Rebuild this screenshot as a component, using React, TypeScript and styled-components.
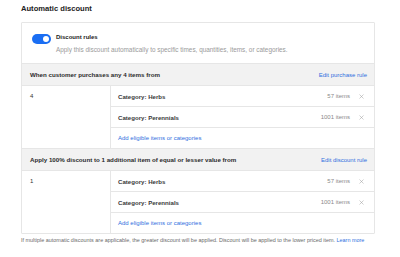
import React from 'react'
import styled, { createGlobalStyle } from 'styled-components'

const GlobalStyle = createGlobalStyle`
    html, body {
        margin: 0;
        padding: 0;
        background: #fff;
    }
    body {
        font-family: "Liberation Sans", Arial, sans-serif;
        color: #2b2b2b;
    }
`

interface Rule {
    title: string
    action: string
    qty: string
    items: { name: string; count: string }[]
}

const rules: Rule[] = [
    {
        title: 'When customer purchases any 4 items from',
        action: 'Edit purchase rule',
        qty: '4',
        items: [
            { name: 'Category: Herbs', count: '57 items' },
            { name: 'Category: Perennials', count: '1001 items' },
        ],
    },
    {
        title: 'Apply 100% discount to 1 additional item of equal or lesser value from',
        action: 'Edit discount rule',
        qty: '1',
        items: [
            { name: 'Category: Herbs', count: '57 items' },
            { name: 'Category: Perennials', count: '1001 items' },
        ],
    },
]

export default function App() {
    return (
        <Page>
            <GlobalStyle />
            <Title>Automatic discount</Title>
            <Card>
                <ToggleSection>
                    <Toggle>
                        <Knob />
                    </Toggle>
                    <ToggleText>
                        <ToggleLabel>Discount rules</ToggleLabel>
                        <ToggleHint>Apply this discount automatically to specific times, quantities, items, or categories.</ToggleHint>
                    </ToggleText>
                </ToggleSection>
                {rules.map(rule => (
                    <RuleBlock key={rule.action}>
                        <RuleHeader>
                            <RuleTitle>{rule.title}</RuleTitle>
                            <Link>{rule.action}</Link>
                        </RuleHeader>
                        <RuleBody>
                            <Qty>{rule.qty}</Qty>
                            <ItemList>
                                {rule.items.map(item => (
                                    <ItemRow key={item.name}>
                                        <ItemName>{item.name}</ItemName>
                                        <ItemCount>{item.count}</ItemCount>
                                        <RemoveIcon viewBox="0 0 10 10">
                                            <path d="M1 1 L9 9 M9 1 L1 9" />
                                        </RemoveIcon>
                                    </ItemRow>
                                ))}
                                <ItemRow>
                                    <Link>Add eligible items or categories</Link>
                                </ItemRow>
                            </ItemList>
                        </RuleBody>
                    </RuleBlock>
                ))}
            </Card>
            <Footer>
                If multiple automatic discounts are applicable, the greater discount will be applied. Discount will be applied to the lower priced item. <Link>Learn more</Link>
            </Footer>
        </Page>
    )
}

const Page = styled.div`
    width: 400px;
    height: 257px;
    padding: 4px 25px 0 21px;
    box-sizing: border-box;
    overflow: hidden;
`

const Title = styled.div`
    font-size: 7.6px;
    font-weight: 700;
    line-height: 10px;
    height: 18px;
    color: #222;
`

const Card = styled.div`
    border: 1px solid #e6e6e6;
    border-radius: 1px;
`

const ToggleSection = styled.div`
    display: flex;
    align-items: flex-start;
    gap: 5px;
    padding: 10px 11px 0 10px;
    height: 41px;
    box-sizing: border-box;
    border-bottom: 1px solid #e6e6e6;
`

const Toggle = styled.div`
    width: 19px;
    height: 10px;
    border-radius: 5px;
    background: #1a6ef3;
    position: relative;
    flex-shrink: 0;
    margin-top: 1px;
`

const Knob = styled.div`
    position: absolute;
    right: 2px;
    top: 2px;
    width: 6px;
    height: 6px;
    border-radius: 50%;
    background: #fff;
`

const ToggleText = styled.div`
    display: flex;
    flex-direction: column;
    gap: 4px;
`

const ToggleLabel = styled.div`
    font-size: 6px;
    font-weight: 700;
    line-height: 8px;
    color: #222;
`

const ToggleHint = styled.div`
    font-size: 6.4px;
    line-height: 9px;
    color: #9a9a9a;
`

const RuleBlock = styled.div`
    & + & {
        border-top: 1px solid #e6e6e6;
    }
`

const RuleHeader = styled.div`
    display: flex;
    justify-content: space-between;
    align-items: center;
    height: 21px;
    padding: 0 7px 0 8px;
    background: #f2f2f2;
    border-bottom: 1px solid #e6e6e6;
`

const RuleTitle = styled.div`
    font-size: 6.2px;
    font-weight: 700;
    color: #2b2b2b;
`

const Link = styled.span`
    font-size: 6px;
    color: #2f6fe0;
    cursor: pointer;
`

const RuleBody = styled.div`
    display: grid;
    grid-template-columns: 89px 1fr;
`

const Qty = styled.div`
    padding: 7px 8px;
    font-size: 6px;
    color: #333;
    border-right: 1px solid #e6e6e6;
`

const ItemList = styled.div`
    display: flex;
    flex-direction: column;
`

const ItemRow = styled.div`
    display: flex;
    align-items: center;
    height: 20px;
    padding: 0 10px 0 7px;
    & + & {
        border-top: 1px solid #e6e6e6;
    }
`

const ItemName = styled.div`
    flex: 1;
    font-size: 6.1px;
    font-weight: 700;
    color: #3a3a3a;
`

const ItemCount = styled.div`
    font-size: 6px;
    color: #8a8a8a;
    margin-right: 9px;
`

const RemoveIcon = styled.svg`
    width: 5px;
    height: 5px;
    fill: none;
    stroke: #9a9a9a;
    stroke-width: 1;
`

const Footer = styled.div`
    margin-top: 2px;
    font-size: 5.45px;
    line-height: 8px;
    color: #6a6a6a;
    white-space: nowrap;
    ${Link} {
        font-size: 5.45px;
    }
`
